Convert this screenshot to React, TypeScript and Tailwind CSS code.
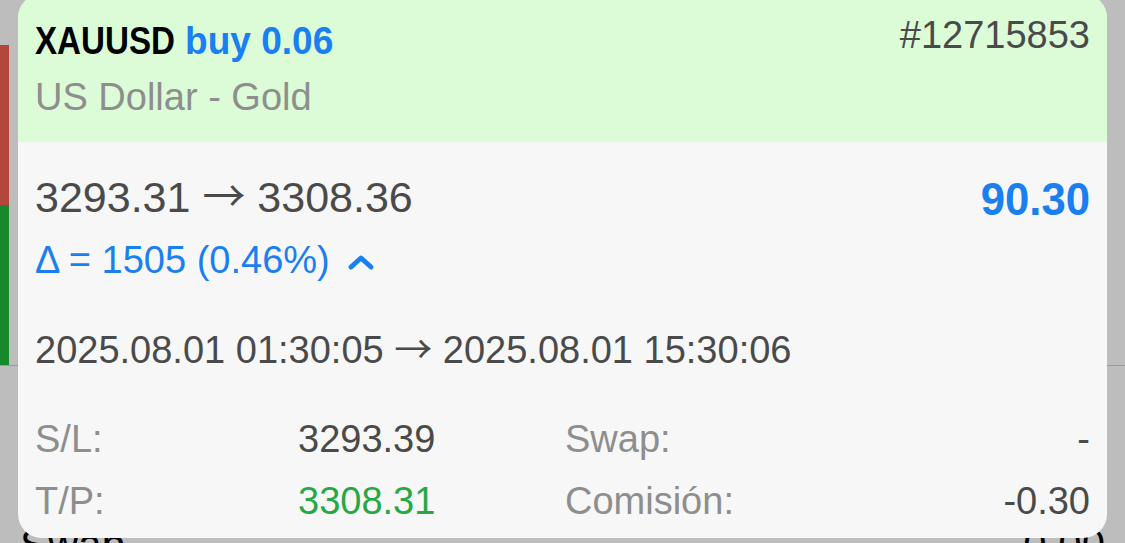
import React from "react";

function ChevronUp() {
  return (
    <svg width="28" height="18" viewBox="0 0 28 18" className="ml-[17px] mt-[4px]">
      <polyline
        points="4,14 14,5 24,14"
        fill="none"
        stroke="#1a7ff0"
        strokeWidth="5"
        strokeLinecap="round"
        strokeLinejoin="round"
      />
    </svg>
  );
}

// thin long arrow like the iOS one
function Arrow() {
  return <span className="font-['Noto_Sans_CJK_JP','DejaVu_Sans',sans-serif]">→</span>;
}

export default function App() {
  return (
    <div className="relative w-[1125px] h-[543px] overflow-hidden bg-[#bdbdbd] font-['Liberation_Sans',Arial,sans-serif]">
      {/* chart and rows behind the popup */}
      <div className="absolute left-0 top-[45px] w-[9px] h-[160px] bg-[#b4473d]" />
      <div className="absolute left-0 top-[205px] w-[9px] h-[160px] bg-[#17892b]" />
      <div className="absolute left-0 top-[365px] w-full h-px bg-[#9c9c9c]" />
      <div className="absolute left-[20px] top-[520px] text-[42px] leading-[50px] text-black">Swap</div>
      <div className="absolute right-[20px] top-[520px] text-[42px] leading-[50px] text-black">0.00</div>

      <div className="relative ml-[18px] -mt-[6px] w-[1089px] h-[544px] rounded-[24px] overflow-hidden bg-[#f7f7f7]">
        <div className="bg-[#dcfcd8] h-[148px] px-[17px] pt-[24px]">
          <div className="flex justify-between items-start">
            <div className="flex h-[46px] leading-[46px] text-[39px] font-bold whitespace-nowrap">
              <div className="w-[150px]">
                <span className="inline-block origin-left scale-x-[0.85] text-black">XAUUSD</span>
              </div>
              <div>
                <span className="inline-block origin-left scale-x-[0.95] text-[#1a7ff0]">buy 0.06</span>
              </div>
            </div>
            <div className="-mt-[6px] h-[46px] leading-[46px] text-[38px] text-[#4a4a4a]">#12715853</div>
          </div>
          <div className="mt-[10px] h-[46px] leading-[46px] text-[38px] text-[#8e8e8e]">US Dollar - Gold</div>
        </div>

        <div className="px-[17px] pt-[26px]">
          <div className="flex justify-between items-start">
            <div className="h-[50px] leading-[50px] text-[43px] text-[#4a4a4a] whitespace-nowrap">
              3293.31 <Arrow /> 3308.36
            </div>
            <div className="mt-[6px] h-[50px] leading-[50px] text-[46px] font-bold">
              <span className="inline-block origin-right scale-x-[0.95] text-[#1a7ff0]">90.30</span>
            </div>
          </div>
          <div className="mt-[13px] h-[46px] flex items-center text-[38px] text-[#1a7ff0]">
            <span className="leading-[46px]">Δ = 1505 (0.46%)</span>
            <ChevronUp />
          </div>
          <div className="mt-[41px] h-[46px] leading-[46px] text-[38px] text-[#4a4a4a] whitespace-nowrap">
            2025.08.01 01:30:05 <Arrow /> 2025.08.01 15:30:06
          </div>

          <div className="mt-[46px] grid grid-cols-[263px_267px_1fr_auto] gap-y-[16px] text-[38px] leading-[46px]">
            <div className="text-[#8e8e8e]">S/L:</div>
            <div className="text-[#4a4a4a]">3293.39</div>
            <div className="text-[#8e8e8e]">Swap:</div>
            <div className="text-right text-[#4a4a4a]">-</div>
            <div className="text-[#8e8e8e]">T/P:</div>
            <div className="text-[#28a745]">3308.31</div>
            <div className="text-[#8e8e8e]">Comisión:</div>
            <div className="text-right text-[#4a4a4a]">-0.30</div>
          </div>
        </div>
      </div>
    </div>
  );
}
